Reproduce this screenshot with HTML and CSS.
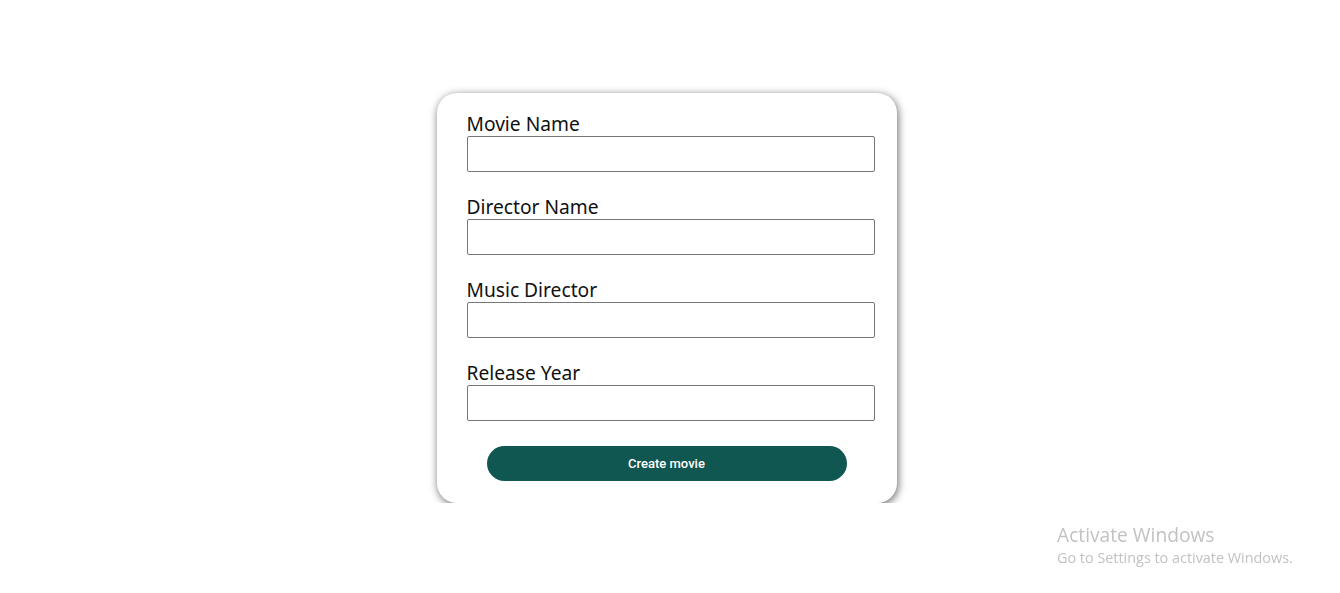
FILE: index.html
```html
<!DOCTYPE html>
<html lang="en">
<head>
<meta charset="utf-8">
<title>Create movie</title>
<link rel="stylesheet" href="styles.css">
</head>
<body>
<main class="page">
  <form class="card">
    <div class="field">
      <label class="label" for="movie">Movie Name</label>
      <input class="input" id="movie" type="text" autofocus>
    </div>
    <div class="field">
      <label class="label" for="director">Director Name</label>
      <input class="input" id="director" type="text">
    </div>
    <div class="field">
      <label class="label" for="music">Music Director</label>
      <input class="input" id="music" type="text">
    </div>
    <div class="field">
      <label class="label" for="year">Release Year</label>
      <input class="input" id="year" type="text">
    </div>
    <div class="actions">
      <button class="btn" type="button">Create movie</button>
    </div>
  </form>
</main>
<div class="watermark">
  <div class="wm-title">Activate Windows</div>
  <div class="wm-sub">Go to Settings to activate Windows.</div>
</div>
</body>
</html>
```
FILE: styles.css
```css
html, body {
  margin: 0;
  padding: 0;
  background: #ffffff;
}
.page {
  display: flex;
  justify-content: center;
  padding: 93px 7px 0 0;
}
.card {
  width: 460px;
  height: 410px;
  box-sizing: border-box;
  border-radius: 20px;
  background: #fff;
  box-shadow: 1px 2px 8px rgba(0,0,0,0.6);
  padding: 21px 22px 0 30px;
  display: flex;
  flex-direction: column;
  gap: 25px;
}
.field {
  display: flex;
  flex-direction: column;
}
.label {
  font-family: "Noto Sans", "Open Sans", sans-serif;
  font-size: 19.2px;
  line-height: 20px;
  padding-bottom: 2px;
  color: #111;
}
.input {
  width: 408px;
  height: 36px;
  box-sizing: border-box;
  border: 1px solid #767676;
  border-radius: 2px;
  margin: 0;
  padding: 0 4px;
  font-size: 16px;
  outline: none;
  caret-color: #5a1a1a;
}
.actions {
  display: flex;
  padding-left: 20px;
}
.btn {
  width: 360px;
  height: 35px;
  border: none;
  border-radius: 18px;
  background: #0f5750;
  color: #fff;
  font-family: Roboto, "Liberation Sans", Arial, sans-serif;
  font-weight: 500;
  font-size: 13px;
  cursor: pointer;
}
.watermark {
  position: fixed;
  left: 1057px;
  top: 523px;
  font-family: "Open Sans", "Noto Sans", sans-serif;
  color: #c2c2c2;
}
.wm-title {
  font-size: 19.2px;
  line-height: 24px;
}
.wm-sub {
  font-size: 14.4px;
  line-height: 22px;
}
```
